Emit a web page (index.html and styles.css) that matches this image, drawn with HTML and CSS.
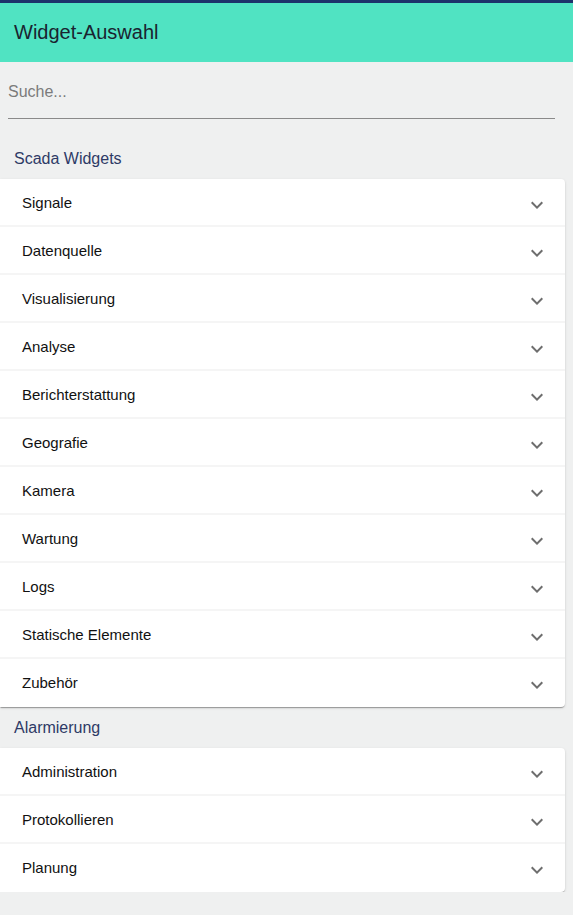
FILE: index.html
```html
<!DOCTYPE html>
<html lang="de">
<head>
<meta charset="utf-8">
<title>Widget-Auswahl</title>
<link rel="stylesheet" href="styles.css">
</head>
<body>
<div class="topline"></div>
<header class="header"><h1 class="title">Widget-Auswahl</h1></header>
<div class="search"><input class="search-input" type="text" placeholder="Suche..."></div>

<h2 class="section">Scada Widgets</h2>
<div class="card">
  <div class="row"><span>Signale</span><svg class="chev" viewBox="0 0 24 24"><path d="M16.59 8.59L12 13.17 7.41 8.59 6 10l6 6 6-6z"/></svg></div>
  <div class="row"><span>Datenquelle</span><svg class="chev" viewBox="0 0 24 24"><path d="M16.59 8.59L12 13.17 7.41 8.59 6 10l6 6 6-6z"/></svg></div>
  <div class="row"><span>Visualisierung</span><svg class="chev" viewBox="0 0 24 24"><path d="M16.59 8.59L12 13.17 7.41 8.59 6 10l6 6 6-6z"/></svg></div>
  <div class="row"><span>Analyse</span><svg class="chev" viewBox="0 0 24 24"><path d="M16.59 8.59L12 13.17 7.41 8.59 6 10l6 6 6-6z"/></svg></div>
  <div class="row"><span>Berichterstattung</span><svg class="chev" viewBox="0 0 24 24"><path d="M16.59 8.59L12 13.17 7.41 8.59 6 10l6 6 6-6z"/></svg></div>
  <div class="row"><span>Geografie</span><svg class="chev" viewBox="0 0 24 24"><path d="M16.59 8.59L12 13.17 7.41 8.59 6 10l6 6 6-6z"/></svg></div>
  <div class="row"><span>Kamera</span><svg class="chev" viewBox="0 0 24 24"><path d="M16.59 8.59L12 13.17 7.41 8.59 6 10l6 6 6-6z"/></svg></div>
  <div class="row"><span>Wartung</span><svg class="chev" viewBox="0 0 24 24"><path d="M16.59 8.59L12 13.17 7.41 8.59 6 10l6 6 6-6z"/></svg></div>
  <div class="row"><span>Logs</span><svg class="chev" viewBox="0 0 24 24"><path d="M16.59 8.59L12 13.17 7.41 8.59 6 10l6 6 6-6z"/></svg></div>
  <div class="row"><span>Statische Elemente</span><svg class="chev" viewBox="0 0 24 24"><path d="M16.59 8.59L12 13.17 7.41 8.59 6 10l6 6 6-6z"/></svg></div>
  <div class="row"><span>Zubehör</span><svg class="chev" viewBox="0 0 24 24"><path d="M16.59 8.59L12 13.17 7.41 8.59 6 10l6 6 6-6z"/></svg></div>
</div>

<h2 class="section">Alarmierung</h2>
<div class="card">
  <div class="row"><span>Administration</span><svg class="chev" viewBox="0 0 24 24"><path d="M16.59 8.59L12 13.17 7.41 8.59 6 10l6 6 6-6z"/></svg></div>
  <div class="row"><span>Protokollieren</span><svg class="chev" viewBox="0 0 24 24"><path d="M16.59 8.59L12 13.17 7.41 8.59 6 10l6 6 6-6z"/></svg></div>
  <div class="row"><span>Planung</span><svg class="chev" viewBox="0 0 24 24"><path d="M16.59 8.59L12 13.17 7.41 8.59 6 10l6 6 6-6z"/></svg></div>
</div>
</body>
</html>
```
FILE: styles.css
```css
html, body {
  margin: 0;
  padding: 0;
  background: #eff0f0;
  font-family: "Liberation Sans", Arial, sans-serif;
}
.topline {
  height: 3px;
  background: #1c336b;
}
.header {
  height: 59px;
  background: #50e3c2;
  display: flex;
  align-items: center;
  padding-left: 14px;
}
.title {
  margin: 0;
  font-size: 20px;
  font-weight: normal;
  color: #1a2330;
}
.search {
  padding: 18px 18px 0 8px;
}
.search-input {
  display: block;
  width: 100%;
  box-sizing: border-box;
  border: 0;
  border-bottom: 1px solid #8a8a8a;
  background: transparent;
  font-family: "Liberation Sans", Arial, sans-serif;
  font-size: 16px;
  height: 39px;
  padding: 0 0 14px 0;
  color: #333;
  outline: none;
}
.search-input::placeholder {
  color: #7b7b7b;
}
.section {
  margin: 0;
  height: 41px;
  box-sizing: border-box;
  padding: 0 14px;
  display: flex;
  align-items: center;
  font-size: 16px;
  font-weight: normal;
  color: #2e3a66;
}
.search + .section {
  height: 60px;
  padding-top: 19px;
}
.card {
  width: 565px;
  background: #fff;
  border-radius: 0 4px 4px 0;
  box-shadow: 0 2px 1px -1px rgba(0,0,0,.2), 0 1px 1px 0 rgba(0,0,0,.14), 0 1px 3px 0 rgba(0,0,0,.12);
}
.row {
  height: 48px;
  box-sizing: border-box;
  display: flex;
  align-items: center;
  justify-content: space-between;
  padding: 0 16px 2px 22px;
  font-size: 15px;
  color: #111;
}
.row:not(:last-child) {
  box-shadow: inset 0 -2px 0 #f5f5f5;
}
.chev {
  width: 24px;
  height: 24px;
  fill: #6e6e6e;
  margin-top: 6px;
}
```
